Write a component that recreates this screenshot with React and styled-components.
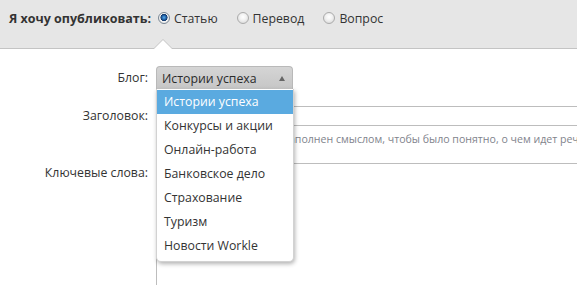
import { createGlobalStyle, styled } from "styled-components";

const GlobalStyle = createGlobalStyle`
  html, body {
    margin: 0;
    padding: 0;
    background: #fff;
    overflow: hidden;
  }
  body {
    font-family: "Open Sans", "Liberation Sans", sans-serif;
    font-size: 12.3px;
    color: #333;
  }
`;

const Page = styled.div`
  width: 577px;
  height: 285px;
  overflow: hidden;
`;

const TopBar = styled.div`
  position: relative;
  height: 49px;
  background: #e6e6e6;
  border-bottom: 1px solid #c4c4c4;
  display: flex;
  align-items: flex-start;
  padding: 8px 0 0 9px;
  box-sizing: border-box;
`;

const TopRow = styled.div`
  display: flex;
  align-items: center;
  height: 20px;
`;

const Lead = styled.span`
  font-weight: bold;
  font-size: 12.5px;
  color: #333;
  margin-right: 7px;
`;

const RadioLabel = styled.label`
  display: flex;
  align-items: center;
  gap: 4px;
  margin-right: 19px;
  color: #333;
`;

const RadioDot = styled.span`
  width: 12px;
  height: 12px;
  box-sizing: border-box;
  border-radius: 50%;
  border: 1px solid ${(p) => (p.$checked ? "#7a8794" : "#ababab")};
  background: ${(p) =>
    p.$checked
      ? "radial-gradient(circle at 50% 45%, #5ab0ee 0, #1c5aa0 2.3px, #0f3566 3.3px, #f4f4f4 3.8px, #dcdcdc 100%)"
      : "radial-gradient(circle at 50% 40%, #ffffff 0, #f2f2f2 40%, #d2d2d2 100%)"};
`;

const Notch = styled.span`
  position: absolute;
  left: 153px;
  bottom: -1px;
  width: 0;
  height: 0;
  border-left: 10px solid transparent;
  border-right: 10px solid transparent;
  border-bottom: 10px solid #c4c4c4;

  &::after {
    content: "";
    position: absolute;
    left: -9px;
    top: 1px;
    border-left: 9px solid transparent;
    border-right: 9px solid transparent;
    border-bottom: 9px solid #fff;
  }
`;

const Form = styled.div`
  display: grid;
  grid-template-columns: 148px 1fr;
  column-gap: 8px;
  padding-top: 17px;
`;

const Label = styled.div`
  text-align: right;
  color: #333;
  line-height: 16px;
  padding-top: ${(p) => p.$top || 0}px;
  margin-top: ${(p) => p.$mt || 0}px;
`;

const Field = styled.div`
  position: relative;
  margin-top: ${(p) => p.$mt || 0}px;
`;

const Select = styled.div`
  position: relative;
  width: 137px;
  height: 23px;
  box-sizing: border-box;
  border: 1px solid #b9b9b9;
  border-bottom: none;
  border-radius: 4px 4px 0 0;
  background: linear-gradient(#d5d5d5, #c6c6c6);
  display: flex;
  align-items: center;
  justify-content: space-between;
  padding: 0 7px 0 5px;
  color: #2b2b2b;
`;

const Arrow = styled.span`
  width: 0;
  height: 0;
  border-left: 3.5px solid transparent;
  border-right: 3.5px solid transparent;
  border-bottom: 5px solid #666;
`;

const Menu = styled.ul`
  position: absolute;
  z-index: 3;
  top: 23px;
  left: 0;
  width: 138px;
  margin: 0;
  padding: 1px 0 3px;
  list-style: none;
  background: #fff;
  border: 1px solid #d2d2d2;
  border-top: none;
  border-radius: 0 0 5px 5px;
  box-sizing: border-box;
  box-shadow: 1px 2px 4px rgba(0, 0, 0, 0.3);
`;

const Item = styled.li`
  height: 24px;
  line-height: 24px;
  padding-left: 7px;
  white-space: nowrap;
  color: ${(p) => (p.$active ? "#fff" : "#333")};
  background: ${(p) => (p.$active ? "#5aaae0" : "transparent")};
`;

const TextInput = styled.div`
  height: 20px;
  box-sizing: border-box;
  border: 1px solid #bdbdbd;
  background: #fff;
  width: 460px;
`;

const Hint = styled.div`
  color: #7f838c;
  font-size: 10.6px;
  line-height: 16px;
  margin-top: 5px;
  padding-left: 0;
  white-space: nowrap;
`;

const TextArea = styled.div`
  height: 140px;
  box-sizing: border-box;
  border: 1px solid #bdbdbd;
  background: #fff;
  width: 460px;
`;

const blogs = [
  "Истории успеха",
  "Конкурсы и акции",
  "Онлайн-работа",
  "Банковское дело",
  "Страхование",
  "Туризм",
  "Новости Workle",
];

export default function App() {
  return (
    <Page>
      <GlobalStyle />
      <TopBar>
        <TopRow>
          <Lead>Я хочу опубликовать:</Lead>
          <RadioLabel>
            <RadioDot $checked />
            Статью
          </RadioLabel>
          <RadioLabel>
            <RadioDot />
            Перевод
          </RadioLabel>
          <RadioLabel>
            <RadioDot />
            Вопрос
          </RadioLabel>
        </TopRow>
        <Notch />
      </TopBar>
      <Form>
        <Label $top={4}>Блог:</Label>
        <Field>
          <Select>
            Истории успеха
            <Arrow />
          </Select>
          <Menu>
            {blogs.map((b, i) => (
              <Item key={b} $active={i === 0}>
                {b}
              </Item>
            ))}
          </Menu>
        </Field>

        <Label $mt={17} $top={2}>Заголовок:</Label>
        <Field $mt={17}>
          <TextInput />
          <Hint>
            Заголовок должен быть наполнен смыслом, чтобы было понятно, о чем идет речь
          </Hint>
        </Field>

        <Label $mt={16} $top={2}>Ключевые слова:</Label>
        <Field $mt={16}>
          <TextArea />
        </Field>
      </Form>
    </Page>
  );
}
